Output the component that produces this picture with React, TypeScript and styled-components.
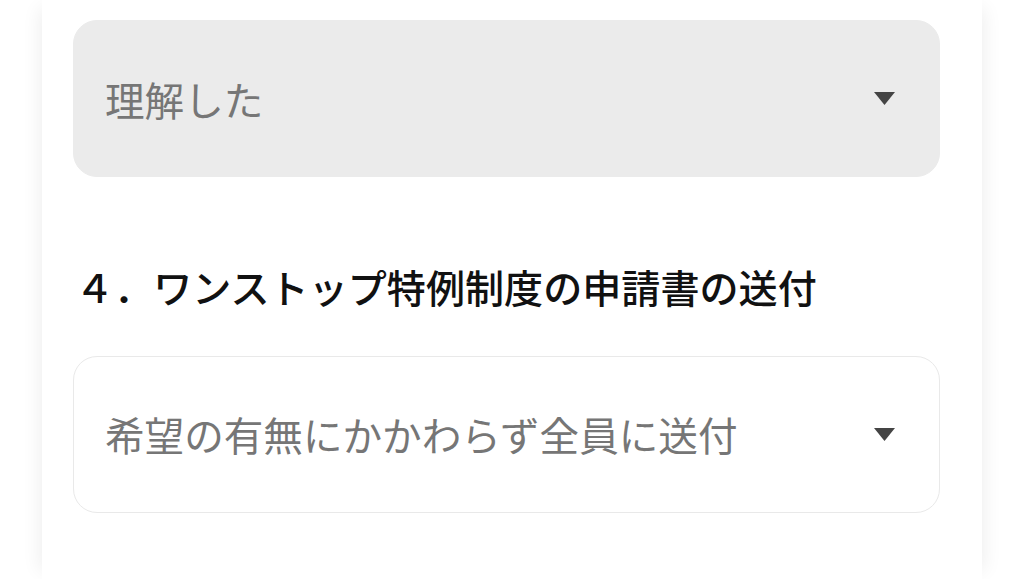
import React from "react";
import styled, { createGlobalStyle } from "styled-components";

const Global = createGlobalStyle`
  html, body {
    margin: 0;
    padding: 0;
    background: #ffffff;
    font-family: "Noto Sans CJK JP", "Noto Sans", sans-serif;
  }
`;

const Page = styled.div`
  padding: 0 42px;
  height: 579px;
  overflow: hidden;
`;

const Card = styled.div`
  background: #ffffff;
  min-height: 579px;
  padding: 20px 42px 40px 31px;
  box-shadow: -10px 0 18px -8px rgba(0, 0, 0, 0.07), 10px 0 18px -8px rgba(0, 0, 0, 0.07);
  box-sizing: border-box;
`;

const Select = styled.div<{ $filled?: boolean }>`
  display: flex;
  align-items: center;
  justify-content: space-between;
  height: 157px;
  box-sizing: border-box;
  padding: 0 44px 0 31px;
  border-radius: 24px;
  background: ${(p) => (p.$filled ? "#ebebeb" : "#ffffff")};
  border: 1px solid ${(p) => (p.$filled ? "#ebebeb" : "#e9e9e9")};
  color: #767676;
  font-size: 39.6px;
  line-height: 1.5;
`;

const Value = styled.span`
  white-space: nowrap;
`;

const Heading = styled.h2`
  margin: 80px 0 40px 2px;
  font-size: 39.1px;
  line-height: 1.5;
  font-weight: 500;
  color: #111111;
  white-space: nowrap;
`;

const Caret = () => (
  <svg width="21" height="13" viewBox="0 0 21 13">
    <path d="M0 0 H21 L10.5 13 Z" fill="#444444" />
  </svg>
);

export default function App() {
  return (
    <>
      <Global />
      <Page>
        <Card>
          <Select $filled>
            <Value>理解した</Value>
            <Caret />
          </Select>
          <Heading>４．ワンストップ特例制度の申請書の送付</Heading>
          <Select>
            <Value>希望の有無にかかわらず全員に送付</Value>
            <Caret />
          </Select>
        </Card>
      </Page>
    </>
  );
}
